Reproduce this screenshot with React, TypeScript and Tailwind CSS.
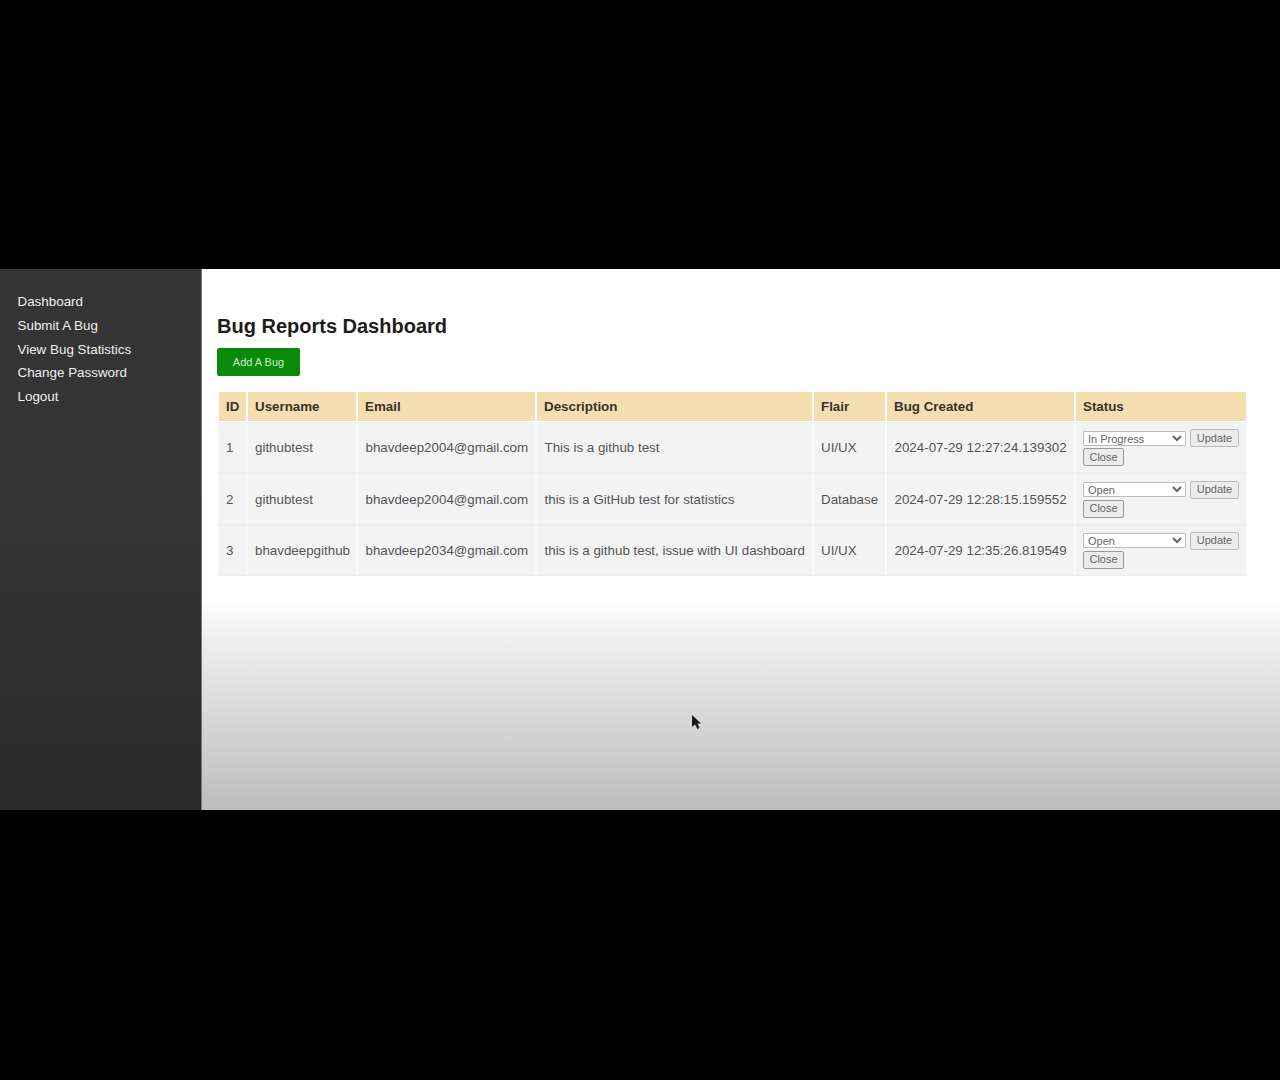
const bugs = [
  { id: 1, username: "githubtest", email: "bhavdeep2004@gmail.com", description: "This is a github test", flair: "UI/UX", created: "2024-07-29 12:27:24.139302", status: "In Progress" },
  { id: 2, username: "githubtest", email: "bhavdeep2004@gmail.com", description: "this is a GitHub test for statistics", flair: "Database", created: "2024-07-29 12:28:15.159552", status: "Open" },
  { id: 3, username: "bhavdeepgithub", email: "bhavdeep2034@gmail.com", description: "this is a github test, issue with UI dashboard", flair: "UI/UX", created: "2024-07-29 12:35:26.819549", status: "Open" },
];

const links = ["Dashboard", "Submit A Bug", "View Bug Statistics", "Change Password", "Logout"];
const headers = ["ID", "Username", "Email", "Description", "Flair", "Bug Created", "Status"];
const widths = ["w-[29px]", "w-[110px]", "w-[179px]", "w-[277px]", "w-[73px]", "w-[189px]", "w-[172px]"];

const cell = "bg-[#f3f3f4] border border-x-[#f8f8f8] border-y-[#eeeeee] pt-[1px]";

const App = () => {
  return (
    <div className="min-h-[1080px] bg-black pt-[269px] font-['Liberation_Sans',Arial,sans-serif]">
      <div className="h-[541px] flex">
        <nav className="w-[202px] shrink-0 bg-[linear-gradient(to_bottom,#353535_0%,#333333_50%,#2a2a2a_100%)] pt-[23px] pl-[17.5px] border-r border-[#777]">
          <ul className="flex flex-col gap-[3.75px]">
            {links.map((link) => (
              <li key={link} className="text-[13.4px] leading-[20px] text-[#eeeeee]">
                {link}
              </li>
            ))}
          </ul>
        </nav>

        <main className="relative flex-1 pl-[15px] pt-[45px] bg-[linear-gradient(to_bottom,#ffffff_0%,#ffffff_61%,#efefef_68%,#dcdcdc_80%,#bcbcbc_100%)]">
          <h1 className="text-[20px] leading-[24px] font-bold text-[#1c1c1c]">Bug Reports Dashboard</h1>
          <button className="mt-[10px] block w-[83px] h-[28px] rounded-[2px] bg-[#0a8a0a] text-[11px] text-[#c9f0c9]">
            Add A Bug
          </button>

          <table className="mt-[15px] ml-px w-[1029px] table-fixed border-separate border-spacing-0 text-[13.35px]">
            <thead>
              <tr className="h-[31px]">
                {headers.map((header, i) => (
                  <th key={header} className={`${widths[i]} bg-[#f6deb3] border border-white px-[7px] pt-[2px] text-left font-bold text-[#3a3226]`}>
                    {header}
                  </th>
                ))}
              </tr>
            </thead>
            <tbody>
              {bugs.map((bug) => (
                <tr key={bug.id} className="h-[51.4px] text-[#555555] whitespace-nowrap">
                  <td className={`${cell} px-[7px]`}>{bug.id}</td>
                  <td className={`${cell} px-[7px]`}>{bug.username}</td>
                  <td className={`${cell} px-[7.5px]`}>{bug.email}</td>
                  <td className={`${cell} px-[7.5px]`}>{bug.description}</td>
                  <td className={`${cell} px-[7px]`}>{bug.flair}</td>
                  <td className={`${cell} px-[7.5px]`}>{bug.created}</td>
                  <td className="bg-[#f3f3f4] border border-x-[#f8f8f8] border-y-[#eeeeee] pl-[7px] pr-0">
                    <div className="flex flex-wrap items-center gap-x-[4px] gap-y-[1px] w-[160px]">
                      <select
                        defaultValue={bug.status}
                        className="w-[103px] h-[15px] bg-white border border-[#bbbbbb] rounded-[1px] text-[11px] leading-[13px] text-[#666666]"
                      >
                        <option>Open</option>
                        <option>In Progress</option>
                        <option>Closed</option>
                      </select>
                      <button className="w-[49px] h-[18px] bg-[#ececec] border border-[#bbbbbb] rounded-[2px] text-[11px] leading-none text-[#666666]">
                        Update
                      </button>
                      <button className="w-[41px] h-[18px] bg-[#ececec] border border-[#999999] rounded-[2px] text-[11px] leading-none text-[#666666]">
                        Close
                      </button>
                    </div>
                  </td>
                </tr>
              ))}
            </tbody>
          </table>

          {/* mouse pointer */}
          <svg className="absolute left-[488px] top-[445px]" width="14" height="18" viewBox="0 0 14 18">
            <path d="M2 1 L2 13 L5 10.5 L7.5 15 L9.5 14 L7.5 9.5 L11 9.5 Z" fill="#1a1a1a" />
          </svg>
        </main>
      </div>
    </div>
  );
};

export default App;
